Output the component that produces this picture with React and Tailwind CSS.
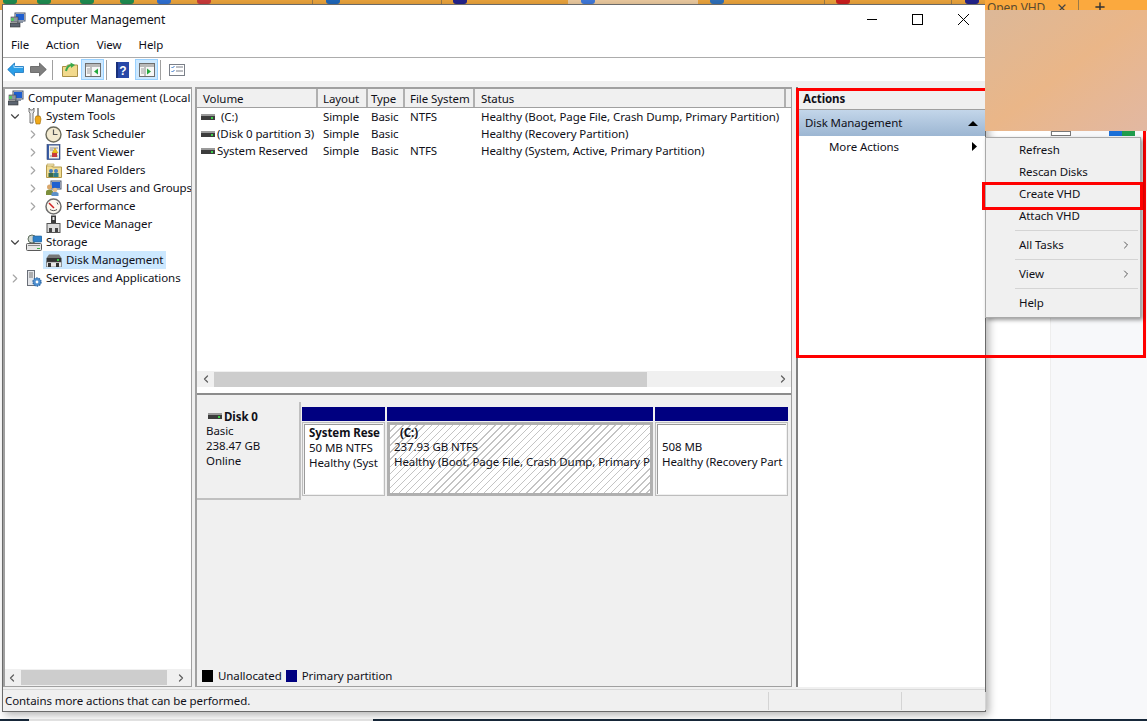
import React from "react";
import { ChevronDown, ChevronRight, ChevronLeft, X, Plus } from "lucide-react";

const font = "font-['Noto_Sans','Open_Sans',sans-serif]";

// small drive glyph used in the volume list and the disk header
const DriveIcon = ({ className = "" }) => (
  <svg width="14" height="8" viewBox="0 0 14 8" className={className}>
    <rect x="0" y="1" width="14" height="2" fill="#9a9a9a" />
    <rect x="0" y="3" width="14" height="4" fill="#3c3c3c" />
    <rect x="10" y="4" width="2" height="2" fill="#3fd04a" />
  </svg>
);

const ComputerIcon = () => (
  <svg width="16" height="16" viewBox="0 0 16 16">
    <rect x="5" y="1" width="10" height="8" fill="#dfe6f0" stroke="#4a5568" />
    <rect x="6" y="2" width="8" height="6" fill="#1f5fd0" />
    <rect x="7" y="9" width="6" height="2" fill="#8a94a3" />
    <rect x="1" y="5" width="7" height="5" fill="#8d95a0" stroke="#444" strokeWidth="0.6" />
    <rect x="0" y="11" width="10" height="4" fill="#5c6470" stroke="#333" strokeWidth="0.6" />
    <rect x="1" y="6" width="3" height="3" fill="#59c266" />
  </svg>
);

const ToolsIcon = () => (
  <svg width="16" height="18" viewBox="0 0 16 18">
    <path d="M3 1v4l1 1v10h3V6l1-1V1L6.500 3h-2z" fill="#e8e8e8" stroke="#555" strokeWidth="0.8" />
    <rect x="11" y="1" width="2" height="8" fill="#999" />
    <path d="M10 9h4l1 3-1 5h-4l-1-5z" fill="#f0a818" stroke="#a06a00" strokeWidth="0.6" />
  </svg>
);

const ClockIcon = () => (
  <svg width="17" height="17" viewBox="0 0 17 17">
    <circle cx="8.500" cy="8.500" r="7.500" fill="#f3ead0" stroke="#6b6b5c" strokeWidth="1.400" />
    <path d="M8.500 3.500v5h4" fill="none" stroke="#555" strokeWidth="1.200" />
  </svg>
);

const LogIcon = () => (
  <svg width="15" height="16" viewBox="0 0 15 16">
    <rect x="1" y="0.500" width="13" height="15" fill="#3a5ea8" stroke="#2b3f70" strokeWidth="0.6" />
    <rect x="3" y="1.500" width="10" height="13" fill="#f4f1e6" />
    <path d="M4 4h8M4 6h3M4 12h8" stroke="#8a8f9c" />
    <path d="M9 4l3 5H6z" fill="#f0c018" stroke="#a88000" strokeWidth="0.4" />
    <rect x="6" y="9" width="5" height="4" fill="#c83c3c" />
  </svg>
);

const SharedIcon = () => (
  <svg width="16" height="16" viewBox="0 0 16 16">
    <path d="M0.500 3.500h5l1 1.500h9v10.500H0.500z" fill="#f1dc93" stroke="#b49a4b" />
    <path d="M1 2h7v2H1z" fill="#f5e8b8" stroke="#b49a4b" strokeWidth="0.6" />
    <circle cx="5" cy="9" r="2" fill="#4a7fc0" />
    <rect x="2.500" y="11" width="5" height="4" fill="#3c6a48" />
    <circle cx="10" cy="9" r="2" fill="#4a7fc0" />
    <rect x="7.500" y="11" width="5" height="4" fill="#2f7d8a" />
  </svg>
);

const UsersIcon = () => (
  <svg width="17" height="17" viewBox="0 0 17 17">
    <rect x="6" y="1" width="10" height="8" fill="#dfe6f0" stroke="#4a5568" />
    <rect x="7" y="2" width="8" height="6" fill="#1f5fd0" />
    <circle cx="4.500" cy="7" r="2.500" fill="#d9a76c" />
    <path d="M1 15V11.500c0-1 1.500-2 3.500-2s3.500 1 3.500 2V15z" fill="#7d8f3c" />
    <circle cx="10" cy="10" r="2.200" fill="#e3bd8c" />
    <path d="M6.500 16v-2.500c0-1 1.500-1.500 3.500-1.500s3.500 .5 3.500 1.500V16z" fill="#5c90c8" />
  </svg>
);

const PerfIcon = () => (
  <svg width="17" height="17" viewBox="0 0 17 17">
    <circle cx="8.500" cy="8.500" r="7.500" fill="#fbf8ef" stroke="#6e6e6e" strokeWidth="1.500" />
    <path d="M4 5l5 5" stroke="#d02020" strokeWidth="1.500" />
    <path d="M5 11.500c2 1.500 5 1.500 7 0M12 4.500l1 2" stroke="#555" fill="none" />
  </svg>
);

const DeviceIcon = () => (
  <svg width="15" height="18" viewBox="0 0 15 18">
    <rect x="5" y="0.500" width="5" height="8" fill="#3a3a3a" />
    <rect x="6.500" y="2" width="2" height="3" fill="#e8e8e8" />
    <rect x="1" y="8.500" width="13" height="9" fill="#dcdcdc" stroke="#555" />
    <rect x="3" y="13" width="3" height="4" fill="#444" />
    <rect x="9" y="13" width="3" height="4" fill="#444" />
  </svg>
);

const StorageIcon = () => (
  <svg width="16" height="17" viewBox="0 0 16 17">
    <circle cx="6" cy="5" r="4" fill="#cfd6cf" stroke="#5e6e5e" />
    <rect x="7" y="2" width="9" height="6" rx="1" fill="#2f80c8" stroke="#1f5f98" strokeWidth="0.6" />
    <rect x="0.500" y="9.500" width="15" height="7" rx="1" fill="#e6e6e6" stroke="#5a5a5a" />
    <rect x="2" y="11" width="12" height="1" fill="#8a8a8a" />
    <rect x="11" y="14" width="3" height="1" fill="#3fb04a" />
  </svg>
);

const DiskMgmtIcon = () => (
  <svg width="16" height="13" viewBox="0 0 16 13">
    <path d="M3 0.500h10L15.500 4h-15z" fill="#777" />
    <rect x="0.500" y="4" width="15" height="4" fill="#333" />
    <rect x="11" y="5" width="2" height="2" fill="#3fd04a" />
    <rect x="0.500" y="8" width="15" height="5" fill="#e8e8e8" stroke="#555" strokeWidth="0.6" />
    <rect x="2" y="9" width="3" height="4" fill="#333" />
    <rect x="10" y="9" width="3" height="4" fill="#333" />
  </svg>
);

const ServicesIcon = () => (
  <svg width="15" height="17" viewBox="0 0 15 17">
    <rect x="0.500" y="0.500" width="7" height="15" fill="#e4e6ea" stroke="#6a6f78" />
    <path d="M2 3h4M2 5h4M2 7h4" stroke="#777" />
    <circle cx="10" cy="12" r="4" fill="#4e8fd0" stroke="#2f6aa8" strokeDasharray="1.500 1" strokeWidth="1.400" />
    <circle cx="10" cy="12" r="1.400" fill="#fff" />
  </svg>
);

const BackArrow = () => (
  <svg width="17" height="15" viewBox="0 0 17 15">
    <path d="M7.500 1L0.700 7.500 7.500 14v-3.500h9v-6h-9z" fill="#2b9fe8" stroke="#1a75bd" strokeWidth="0.8" />
    <path d="M7 3v2.500h9" fill="none" stroke="#a4dcff" />
  </svg>
);

const ForwardArrow = () => (
  <svg width="17" height="15" viewBox="0 0 17 15">
    <path d="M9.500 1l6.800 6.500L9.500 14v-3.500h-9v-6h9z" fill="#7f7f7f" stroke="#5c5c5c" strokeWidth="0.8" />
  </svg>
);

const FolderUp = () => (
  <svg width="16" height="15" viewBox="0 0 16 15">
    <path d="M0.500 4.500h4l1-1.500h10v11.500H0.500z" fill="#f2d98c" stroke="#a98f46" />
    <path d="M4 9c1-4 3-6 6-6" fill="none" stroke="#3aa84a" strokeWidth="2" />
    <path d="M8.500 0.500L13 3 9 6z" fill="#3aa84a" />
  </svg>
);

const PaneIcon = ({ right = false }) => (
  <svg width="16" height="14" viewBox="0 0 16 14">
    <rect x="0.500" y="0.500" width="15" height="13" fill="#f7f7f7" stroke="#6e6e6e" />
    <rect x="1" y="1" width="14" height="3" fill="#b9b9b9" />
    <path d="M6 4v9" stroke="#8a8a8a" />
    <path d="M2 6h3M2 8h3M2 10h3" stroke="#a0a0a0" />
    {right ? (
      <path d="M8 5.500l4 3-4 3z" fill="#22a83c" />
    ) : (
      <path d="M13 5.500l-4 3 4 3z" fill="#22a83c" />
    )}
  </svg>
);

const HelpIcon = () => (
  <svg width="13" height="16" viewBox="0 0 13 16">
    <rect x="0" y="0" width="13" height="16" fill="#2848a8" />
    <rect x="0" y="0" width="2" height="16" fill="#18307a" />
    <text x="7" y="12.500" textAnchor="middle" fontSize="12" fontWeight="700" fill="#fff" fontFamily="Liberation Sans">?</text>
  </svg>
);

const PropsIcon = () => (
  <svg width="16" height="12" viewBox="0 0 16 12">
    <rect x="0.500" y="0.500" width="15" height="11" fill="#fff" stroke="#7a7f88" />
    <path d="M2.500 3l1 1 2-2M2.500 7l1 1 2-2" fill="none" stroke="#3a78c8" />
    <path d="M7 3h7M7 7h7" stroke="#7a7f88" />
  </svg>
);

const treeRows = [
  { label: "Computer Management (Local", icon: ComputerIcon, indent: 0, arrow: null },
  { label: "System Tools", icon: ToolsIcon, indent: 1, arrow: "down" },
  { label: "Task Scheduler", icon: ClockIcon, indent: 2, arrow: "right" },
  { label: "Event Viewer", icon: LogIcon, indent: 2, arrow: "right" },
  { label: "Shared Folders", icon: SharedIcon, indent: 2, arrow: "right" },
  { label: "Local Users and Groups", icon: UsersIcon, indent: 2, arrow: "right" },
  { label: "Performance", icon: PerfIcon, indent: 2, arrow: "right" },
  { label: "Device Manager", icon: DeviceIcon, indent: 2, arrow: null },
  { label: "Storage", icon: StorageIcon, indent: 1, arrow: "down" },
  { label: "Disk Management", icon: DiskMgmtIcon, indent: 2, arrow: null, selected: true },
  { label: "Services and Applications", icon: ServicesIcon, indent: 1, arrow: "right" },
];

const volumes = [
  { name: "(C:)", pad: "pl-[4px]", layout: "Simple", type: "Basic", fs: "NTFS", status: "Healthy (Boot, Page File, Crash Dump, Primary Partition)" },
  { name: "(Disk 0 partition 3)", pad: "", layout: "Simple", type: "Basic", fs: "", status: "Healthy (Recovery Partition)" },
  { name: "System Reserved", pad: "", layout: "Simple", type: "Basic", fs: "NTFS", status: "Healthy (System, Active, Primary Partition)" },
];

// tab strip peeking out above the window
const tabIcons = [
  "left-[3px] w-[14px] bg-[#1f8a50]",
  "left-[37px] w-[14px] bg-[#1f8a50]",
  "left-[80px] w-[14px] bg-[#1f8a50]",
  "left-[120px] w-[14px] bg-[#1f8a50]",
  "left-[157px] w-[14px] bg-[#2f6fd0]",
  "left-[197px] w-[14px] bg-[#c83a3a]",
  "left-[326px] w-[14px] bg-[#1f66b8]",
  "left-[453px] w-[14px] bg-[#23238a]",
  "left-[581px] w-[14px] bg-[#3f78d8]",
  "left-[710px] w-[14px] bg-[#2f6fb8]",
  "left-[836px] w-[14px] bg-[#c81e1e]",
  "left-[965px] w-[14px] bg-[#23238a]",
];

const tabSeps = ["left-[312px]", "left-[441px]", "left-[824px]", "left-[951px]", "left-[1079px]"];

const TreeRow = ({ row }) => {
  const Icon = row.icon;
  return (
    <div className="flex h-[18px] items-center whitespace-nowrap">
      {row.indent === 2 && <div className="w-[21px] shrink-0" />}
      {row.indent > 0 && (
        <div className={`flex w-[14px] shrink-0 items-center justify-center ${row.indent === 1 ? "ml-[3px]" : ""}`}>
          {row.arrow === "down" && <ChevronDown size={15} strokeWidth={2} className="text-[#444]" />}
          {row.arrow === "right" && <ChevronRight size={15} strokeWidth={2} className="text-[#a6a6a6]" />}
        </div>
      )}
      <div className={`flex h-[18px] items-center pl-[2px] pr-[3px] ${row.indent === 0 ? "ml-[1px]" : row.indent === 1 ? "ml-[2px]" : "ml-[3px]"} ${row.selected ? "bg-[#cce8ff]" : ""}`}>
        <div className={`flex shrink-0 items-center justify-center ${row.indent === 2 ? "w-[17px]" : "w-[16px]"}`}>
          <Icon />
        </div>
        <span className="ml-[4px] leading-[18px]">{row.label}</span>
      </div>
    </div>
  );
};

const HeaderCell = ({ width, pad, children }) => (
  <div className={`${width} ${pad} h-full shrink-0 overflow-hidden whitespace-nowrap border-r-2 border-[#b0b0b0] bg-[#f0f0f0] leading-[19px]`}>
    {children}
  </div>
);

const Partition = ({ width, children, hatched = false }) => (
  <div className={`${width} flex shrink-0 flex-col`}>
    <div className="h-[14px] bg-[#000080]" />
    <div className={`mt-[1px] h-[74px] ${hatched ? "bg-[#b0b0b0] p-[3px]" : "border border-[#bdbdbd] bg-[#f0f0f0] p-[1px]"}`}>
      {children}
    </div>
  </div>
);

const MenuItem = ({ label, arrow = false }) => (
  <div className="flex h-[22px] items-center justify-between pl-[33px] pr-[8px]">
    <span>{label}</span>
    {arrow && <ChevronRight size={12} strokeWidth={1.600} className="text-[#333]" />}
  </div>
);

const MenuSep = () => <div className="my-[3px] ml-[29px] mr-[2px] h-0 border-t border-[#d4d4d4]" />;

const App = () => {
  return (
    <div className={`relative h-[721px] w-[1147px] overflow-hidden bg-white text-[11.5px] tracking-[-0.08px] text-[#101018] ${font}`}>
      {/* desktop behind the window */}
      <div className="absolute left-0 right-0 top-0 h-[10px] bg-[#e8a23c]" />
      <div className="absolute left-[568px] top-0 h-[10px] w-[130px] bg-[#e9c89e]" />
      {tabIcons.map((c) => (
        <div key={c} className={`absolute top-0 h-[4px] rounded-b-[3px] ${c}`} />
      ))}
      {tabSeps.map((c) => (
        <div key={c} className={`absolute top-0 h-[10px] w-px bg-[#9a7a48] ${c}`} />
      ))}
      <div className="absolute left-[1050px] right-0 top-[10px] bottom-0 border-l border-[#eeeeee] bg-[#f7f8fa]" />
      <div className="absolute left-[1051px] top-[131px] h-[5px] w-[20px] border border-[#777] bg-white" />
      <div className="absolute left-[1109px] top-[131px] h-[5px] w-[13px] bg-[#1a6fd8]" />
      <div className="absolute left-[1122px] top-[131px] h-[5px] w-[13px] bg-[#1f9d4d]" />
      <div className="absolute bottom-0 left-0 right-0 flex h-[2px] bg-[#17283a]">
        <div className="ml-[29px] h-full w-[344px] bg-[#e8e8e8]" />
      </div>

      {/* window */}
      <div className="absolute left-[2px] top-[4px] flex h-[708px] w-[984px] flex-col border border-[#6a6a6a] bg-[#f0f0f0] shadow-[3px_3px_8px_rgba(0,0,0,0.3)]">
        {/* title bar */}
        <div className="flex h-[29px] shrink-0 items-center bg-white pl-[7px]">
          <ComputerIcon />
          <span className="ml-[5px] text-[12px]">Computer Management</span>
          <div className="ml-auto flex items-center">
            <div className="h-px w-[10px] bg-black" />
            <div className="ml-[35px] h-[11px] w-[11px] border border-black" />
            <svg width="11" height="11" viewBox="0 0 11 11" className="ml-[35px] mr-[16px]">
              <path d="M0 0l11 11M11 0L0 11" stroke="#000" strokeWidth="1" />
            </svg>
          </div>
        </div>
        {/* menu bar */}
        <div className="flex h-[23px] shrink-0 items-center gap-[17px] bg-white pb-[2px] pl-[8px]">
          <span>File</span>
          <span>Action</span>
          <span>View</span>
          <span>Help</span>
        </div>
        {/* toolbar */}
        <div className="flex h-[24px] shrink-0 items-center border-t border-[#acacac] bg-white pl-[4px]">
          <div className="w-[23px]"><BackArrow /></div>
          <div className="w-[17px]"><ForwardArrow /></div>
          <div className="ml-[5px] h-[20px] w-px bg-[#a0a0a0]" />
          <div className="ml-[9px] flex w-[19px] items-center"><FolderUp /></div>
          <div className="flex h-[21px] w-[23px] items-center justify-center border border-[#99d1ff] bg-[#cce8ff]"><PaneIcon /></div>
          <div className="ml-[2px] h-[20px] w-px bg-[#a0a0a0]" />
          <div className="ml-[9px] flex w-[19px] items-center"><HelpIcon /></div>
          <div className="flex h-[21px] w-[23px] items-center justify-center border border-[#99d1ff] bg-[#cce8ff]"><PaneIcon right /></div>
          <div className="ml-[2px] h-[20px] w-px bg-[#a0a0a0]" />
          <div className="ml-[8px]"><PropsIcon /></div>
        </div>

        {/* panes */}
        <div className="flex min-h-0 flex-1 pt-[6px]">
          {/* tree */}
          <div className="flex w-[189px] shrink-0 flex-col border-2 border-[#a0a0a0] bg-white [border-bottom-width:1px] [border-right-width:1px]">
            <div className="flex-1 overflow-hidden">
              {treeRows.map((row) => (
                <TreeRow key={row.label} row={row} />
              ))}
            </div>
            <div className="flex h-[17px] items-center bg-[#f0f0f0] px-[1px]">
              <ChevronLeft size={12} strokeWidth={2.500} className="text-[#606060]" />
              <div className="ml-[3px] h-[15px] w-[146px] bg-[#cdcdcd]" />
              <ChevronRight size={12} strokeWidth={2.500} className="ml-auto mr-[3px] text-[#606060]" />
            </div>
          </div>

          {/* center */}
          <div className="ml-[3px] flex w-[597px] shrink-0 flex-col border-2 border-[#a0a0a0] [border-bottom-width:1px] [border-right-width:1px]">
            <div className="flex h-[304px] shrink-0 flex-col bg-white">
              <div className="flex h-[19px] shrink-0 border-b border-[#a0a0a0]">
                <HeaderCell width="w-[121px]" pad="pl-[6px]">Volume</HeaderCell>
                <HeaderCell width="w-[50px]" pad="pl-[5px]">Layout</HeaderCell>
                <HeaderCell width="w-[37px]" pad="pl-[3px]">Type</HeaderCell>
                <HeaderCell width="w-[70px]" pad="pl-[5px]">File System</HeaderCell>
                <HeaderCell width="w-[311px]" pad="pl-[6px]">Status</HeaderCell>
                <div className="flex-1 bg-[#f0f0f0]" />
              </div>
              <div className="flex-1">
                {volumes.map((v) => (
                  <div key={v.name} className="flex h-[17px] items-center whitespace-nowrap">
                    <div className="flex w-[121px] shrink-0 items-center pl-[4px]">
                      <DriveIcon />
                      <span className={`ml-[2px] ${v.pad}`}>{v.name}</span>
                    </div>
                    <div className="w-[50px] shrink-0 pl-[5px]">{v.layout}</div>
                    <div className="w-[37px] shrink-0 pl-[3px]">{v.type}</div>
                    <div className="w-[70px] shrink-0 pl-[5px]">{v.fs}</div>
                    <div className="pl-[6px]">{v.status}</div>
                  </div>
                ))}
              </div>
              <div className="mb-[6px] flex h-[16px] shrink-0 items-center bg-[#f0f0f0] pl-[3px] pr-[2px]">
                <ChevronLeft size={12} strokeWidth={2.500} className="text-[#606060]" />
                <div className="ml-[2px] h-[15px] w-[433px] bg-[#cdcdcd]" />
                <ChevronRight size={12} strokeWidth={2.500} className="ml-auto text-[#606060]" />
              </div>
            </div>
            <div className="flex min-h-0 flex-1 flex-col border-t-2 border-[#8c8c8c] bg-[#f0f0f0]">
              <div className="flex pt-[7px]">
                <div className="h-[98px] w-[104px] shrink-0 border-b-2 border-r-2 border-[#c0c0c0] bg-[#f0f0f0] pl-[9px] pt-[7px] leading-[15px]">
                  <div className="flex h-[14px] items-center font-bold">
                    <DriveIcon className="ml-[2px] mr-[2px]" />
                    <span>Disk 0</span>
                  </div>
                  <div>Basic</div>
                  <div>238.47 GB</div>
                  <div>Online</div>
                </div>
                <div className="ml-[1px] flex gap-[2px] pt-[5px]">
                  <Partition width="w-[83px]">
                    <div className="h-full overflow-hidden whitespace-nowrap border-l border-t border-[#9a9a9a] bg-white pl-[4px] pr-[3px] leading-[15px]">
                      <div className="overflow-hidden font-bold">System Rese</div>
                      <div>50 MB NTFS</div>
                      <div className="overflow-hidden">Healthy (Syst</div>
                    </div>
                  </Partition>
                  <Partition width="w-[266px]" hatched>
                    <div className="h-full overflow-hidden whitespace-nowrap bg-[repeating-linear-gradient(135deg,#ffffff_0px,#ffffff_4px,#c4c4c4_4px,#c4c4c4_5px)] pl-[4px] leading-[15px]">
                      <div className="h-[14px] pl-[6px] font-bold">(C:)</div>
                      <div>237.93 GB NTFS</div>
                      <div>Healthy (Boot, Page File, Crash Dump, Primary P</div>
                    </div>
                  </Partition>
                  <Partition width="w-[133px]">
                    <div className="h-full overflow-hidden whitespace-nowrap border-l border-t border-[#9a9a9a] bg-white pl-[4px] pt-[14px] leading-[15px]">
                      <div>508 MB</div>
                      <div>Healthy (Recovery Part</div>
                    </div>
                  </Partition>
                </div>
              </div>
              <div className="flex-1" />
              <div className="flex h-[22px] shrink-0 items-center pl-[5px] pt-[2px]">
                <div className="h-[12px] w-[11px] bg-black" />
                <span className="ml-[5px]">Unallocated</span>
                <div className="ml-[4px] h-[12px] w-[11px] bg-[#000080]" />
                <span className="ml-[5px]">Primary partition</span>
              </div>
            </div>
          </div>

          {/* actions */}
          <div className="ml-[4px] flex min-w-0 flex-1 flex-col border-l-2 border-[#808080] bg-white">
            <div className="flex h-[23px] shrink-0 items-center border-b border-[#a0a0a0] bg-[#f0f0f0] pl-[5px] pt-[2px] font-bold">Actions</div>
            <div className="flex h-[26px] shrink-0 items-center justify-between bg-gradient-to-b from-[#c3d6ea] to-[#9cb6d2] px-[7px]">
              <span>Disk Management</span>
              <svg width="10" height="5" viewBox="0 0 10 5"><path d="M5 0l5 5H0z" fill="#000" /></svg>
            </div>
            <div className="flex h-[23px] shrink-0 items-center justify-between pb-[2px] pl-[31px] pr-[8px]">
              <span>More Actions</span>
              <svg width="5" height="9" viewBox="0 0 5 9"><path d="M0 0l5 4.500L0 9z" fill="#000" /></svg>
            </div>
          </div>
        </div>

        {/* status bar */}
        <div className="mt-[2px] flex h-[22px] shrink-0 items-center border-t border-[#d9d9d9] bg-[#f0f0f0] pl-[2px]">
          <span className="w-[763px] shrink-0">Contains more actions that can be performed.</span>
          <div className="h-[18px] w-[133px] shrink-0 border-l border-[#d4d4d4]" />
          <div className="h-[18px] w-[85px] shrink-0 border-x border-[#d4d4d4]" />
        </div>
      </div>

      {/* big red annotation */}
      <div className="pointer-events-none absolute left-[796px] top-[88px] h-[270px] w-[350px] border-[3px] border-[#ff0000]" />

      {/* blurred browser tab strip on the right */}
      <div className="absolute left-[985px] top-0 h-[10px] w-[162px] overflow-hidden bg-[#fba93e]">
        <span className="absolute left-[2px] top-0 text-[12px] leading-[16px] text-[#5a4a30]">Open VHD</span>
        <X size={12} strokeWidth={2.500} className="absolute left-[71px] top-[2px] text-[#444]" />
        <div className="absolute left-[93px] top-0 h-full w-px bg-[#9a7a48]" />
        <Plus size={14} strokeWidth={2.500} className="absolute left-[108px] top-0 text-[#333]" />
      </div>
      <div className="absolute left-[985px] top-[10px] h-[121px] w-[162px] bg-gradient-to-br from-[#dcb898] via-[#eab688] to-[#e2b8a2]" />

      {/* context menu */}
      <div className="absolute left-[985px] top-[137px] h-[181px] w-[156px] border border-[#a9a9a9] bg-[#f0f0f0] pb-[3px] pt-[1px] shadow-[2px_2px_4px_rgba(0,0,0,0.4)]">
        <MenuItem label="Refresh" />
        <MenuItem label="Rescan Disks" />
        <MenuItem label="Create VHD" />
        <MenuItem label="Attach VHD" />
        <MenuSep />
        <MenuItem label="All Tasks" arrow />
        <MenuSep />
        <MenuItem label="View" arrow />
        <MenuSep />
        <MenuItem label="Help" />
      </div>

      {/* small red annotation */}
      <div className="pointer-events-none absolute left-[982px] top-[182px] h-[28px] w-[161px] border-[3px] border-[#ff0000]" />
    </div>
  );
};

export default App;
